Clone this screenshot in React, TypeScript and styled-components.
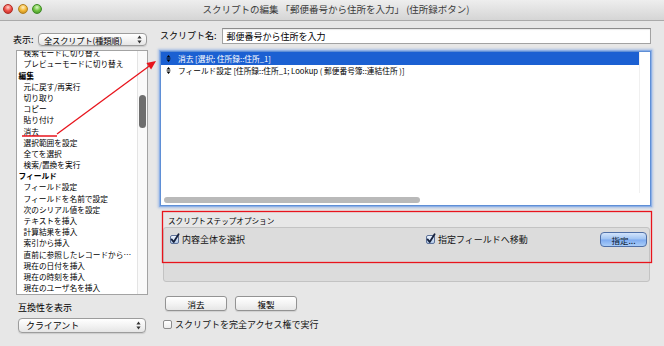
import React from 'react';
import styled, { createGlobalStyle } from 'styled-components';

const GlobalStyle = createGlobalStyle`
  html, body { margin: 0; padding: 0; background: #e7e7e7; }
  body { font-family: "Noto Sans CJK JP", "Liberation Sans", sans-serif; color: #000; }
  * { box-sizing: border-box; }
`;

const Window = styled.div`
  position: relative;
  width: 664px;
  height: 346px;
  background: #e7e7e7;
  overflow: hidden;
  display: flex;
  flex-direction: column;
`;

const TitleBar = styled.div`
  flex: none;
  height: 21px;
  display: grid;
  grid-template-columns: 1fr auto 1fr;
  align-items: center;
  padding: 0 0 2px 8px;
  background: linear-gradient(#eeeeee, #d5d5d5);
  border-bottom: 1px solid #aaaaaa;
`;

const Lights = styled.div`
  display: flex;
  gap: 4.5px;
  margin-left: -5px;
`;

const Light = styled.span<{ $hi: string; $c: string; $d: string }>`
  width: 10px;
  height: 10px;
  border-radius: 50%;
  background: radial-gradient(circle at 50% 30%, ${(p) => p.$hi} 0%, ${(p) => p.$c} 50%, ${(p) => p.$d} 100%);
  border: 1px solid ${(p) => p.$d};
`;

const Title = styled.div`
  font-size: 9.5px;
  color: #3a3a3a;
  white-space: nowrap;
`;

const Content = styled.div`
  flex: 1;
  display: grid;
  grid-template-columns: 135px 492px;
  column-gap: 12px;
  padding-left: 13px;
`;

const Column = styled.div`
  display: flex;
  flex-direction: column;
`;

const ShowRow = styled.div`
  display: flex;
  align-items: center;
  justify-content: space-between;
  width: 134px;
  margin-top: 12px;
  height: 13px;
`;

const Label = styled.span`
  font-size: 9px;
  line-height: 10px;
  white-space: nowrap;
`;

const PopUp = styled.div<{ $w: number; $h: number; $pl: number }>`
  width: ${(p) => p.$w}px;
  height: ${(p) => p.$h}px;
  flex: none;
  display: flex;
  align-items: center;
  justify-content: space-between;
  padding: 0 4px 0 ${(p) => p.$pl}px;
  background: linear-gradient(#ffffff, #f3f3f3 50%, #e5e5e5);
  border: 1px solid #9c9c9c;
  border-radius: 4px;
  box-shadow: 0 1px 1px rgba(0, 0, 0, 0.12);
`;

const PopText = styled.span<{ $fs: number }>`
  font-size: ${(p) => p.$fs}px;
  letter-spacing: -0.1px;
  white-space: nowrap;
`;

const SideList = styled.div`
  margin: 4px 0 0 3px;
  width: 132px;
  height: 245px;
  border: 1px solid #a3a3a3;
  background: #fff;
  display: flex;
  overflow: hidden;
`;

const SideItems = styled.div`
  flex: 1;
  min-width: 0;
  overflow: hidden;
`;

const SideInner = styled.div`
  margin-top: -3.8px;
`;

const SideItem = styled.div<{ $head?: boolean }>`
  height: 11.2px;
  line-height: 11.2px;
  font-size: 7.7px;
  padding-left: ${(p) => (p.$head ? 1.5 : 6.5)}px;
  font-weight: ${(p) => (p.$head ? 700 : 400)};
  white-space: nowrap;
`;

const SideTrack = styled.div`
  flex: none;
  width: 10px;
  border-left: 1px solid #e4e4e4;
  background: #fafafa;
  padding: 44px 0 0 1px;
`;

const SideThumb = styled.div`
  width: 7px;
  height: 33px;
  border-radius: 4px;
  background: #6e6e6e;
`;

const CompatLabel = styled(Label)`
  margin: 8px 0 0 5px;
`;

const CompatPop = styled.div`
  margin: 5px 0 0 5px;
`;

const NameRow = styled.div`
  display: flex;
  align-items: center;
  gap: 5px;
  margin: 7px 1px 0 0;
  height: 16px;
`;

const NameInput = styled.div`
  flex: 1;
  height: 16px;
  display: flex;
  align-items: center;
  padding-left: 4px;
  background: #fff;
  border: 1px solid #a2a2a2;
  border-top-color: #8c8c8c;
  box-shadow: inset 0 1px 1px rgba(0, 0, 0, 0.08);
  font-size: 9px;
  white-space: nowrap;
`;

const StepList = styled.div`
  margin-top: 7px;
  width: 491px;
  height: 155px;
  border: 1px solid #5f8fd6;
  box-shadow: 0 0 0 1px #8db0e6, 0 0 2px 2px rgba(120, 160, 225, 0.55);
  background: #fff;
  display: grid;
  grid-template-columns: 1fr 11px;
  grid-template-rows: 1fr 12px;
`;

const StepRows = styled.div`
  overflow: hidden;
`;

const StepRow = styled.div<{ $sel?: boolean }>`
  height: 12.5px;
  display: flex;
  align-items: center;
  gap: 7px;
  padding-left: 5px;
  background: ${(p) => (p.$sel ? '#1b60d2' : 'transparent')};
  color: ${(p) => (p.$sel ? '#ffffff' : '#000000')};
  font-size: 7.7px;
  white-space: nowrap;
`;

const VTrack = styled.div`
  border-left: 1px solid #f0f0f0;
`;

const HTrack = styled.div`
  padding: 4px 0 0 3px;
`;

const HThumb = styled.div`
  width: 256px;
  height: 6px;
  border-radius: 3px;
  background: #b9b9b9;
`;

const OptLabel = styled.div`
  margin: 10px 0 0 8px;
  font-size: 7.6px;
  line-height: 10px;
  white-space: nowrap;
`;

const GroupBox = styled.div`
  margin: 1px 0 0 3px;
  width: 487px;
  height: 55px;
  border: 1px solid #c3c3c3;
  border-radius: 3px;
  background: #dcdcdc;
  padding: 4px 2px 0 6px;
`;

const OptRow = styled.div`
  display: flex;
  align-items: center;
  height: 15px;
`;

const CheckItem = styled.label<{ $w?: number }>`
  display: flex;
  align-items: center;
  gap: 3px;
  width: ${(p) => (p.$w ? `${p.$w}px` : 'auto')};
  font-size: 9px;
  color: #111;
  white-space: nowrap;
`;

const Box = styled.span<{ $on?: boolean }>`
  width: 9px;
  height: 9px;
  flex: none;
  border-radius: 2px;
  border: 1px solid ${(p) => (p.$on ? '#5d7199' : '#8c8c8c')};
  background: ${(p) => (p.$on ? 'linear-gradient(#eef4fc, #b3cbea)' : 'linear-gradient(#ffffff, #ececec)')};
  display: flex;
  align-items: center;
  justify-content: center;
`;

const AquaButton = styled.div`
  margin-left: auto;
  width: 47px;
  height: 15px;
  display: flex;
  align-items: center;
  justify-content: center;
  border: 1px solid #4f6fa6;
  border-radius: 4px;
  background: linear-gradient(#d3e4fb, #9fc3f2 48%, #7daaf0 52%, #a9cdf8);
  font-size: 8.5px;
  color: #0d1a30;
`;

const ButtonRow = styled.div`
  display: flex;
  gap: 8px;
  margin: 14px 0 0 5px;
`;

const PushButton = styled.div`
  width: 62px;
  height: 15px;
  display: flex;
  align-items: center;
  justify-content: center;
  border: 1px solid #939393;
  border-radius: 3px;
  background: linear-gradient(#ffffff, #f4f4f4 50%, #e6e6e6);
  box-shadow: 0 1px 1px rgba(0, 0, 0, 0.1);
  font-size: 8.5px;
`;

const BottomCheck = styled.div`
  margin: 8px 0 0 3px;
  height: 10px;
  display: flex;
  align-items: center;
`;

const Annotation = styled.svg`
  position: absolute;
  left: 0;
  top: 0;
  width: 664px;
  height: 346px;
  pointer-events: none;
`;

const Arrows = () => (
  <svg width="5" height="9" viewBox="0 0 5 9" style={{ flex: 'none' }}>
    <path d="M2.5 0.5 L4.6 3.4 L0.4 3.4 Z M0.4 5.6 L4.6 5.6 L2.5 8.5 Z" fill="#333" />
  </svg>
);

const Grip = () => (
  <svg width="5" height="7" viewBox="0 0 5 7">
    <path d="M2.5 0 L4.5 2.6 L0.5 2.6 Z M0.5 4.4 L4.5 4.4 L2.5 7 Z M0.5 3.2 H4.5 V3.8 H0.5 Z" fill="#000" />
  </svg>
);

const Check = () => (
  <svg width="9" height="9" viewBox="0 0 9 9" style={{ overflow: 'visible' }}>
    <path d="M1.6 4.4 L3.7 7 L8.6 -0.8" stroke="#16213d" strokeWidth="1.8" fill="none" strokeLinecap="round" strokeLinejoin="round" />
  </svg>
);

const CheckBox = ({ on, label, w }: { on?: boolean; label: string; w?: number }) => (
  <CheckItem $w={w}>
    <Box $on={on}>{on && <Check />}</Box>
    {label}
  </CheckItem>
);

const sideItems: { t: string; h?: boolean }[] = [
  { t: '検索モードに切り替え' },
  { t: 'プレビューモードに切り替え' },
  { t: '編集', h: true },
  { t: '元に戻す/再実行' },
  { t: '切り取り' },
  { t: 'コピー' },
  { t: '貼り付け' },
  { t: '消去' },
  { t: '選択範囲を設定' },
  { t: '全てを選択' },
  { t: '検索/置換を実行' },
  { t: 'フィールド', h: true },
  { t: 'フィールド設定' },
  { t: 'フィールドを名前で設定' },
  { t: '次のシリアル値を設定' },
  { t: 'テキストを挿入' },
  { t: '計算結果を挿入' },
  { t: '索引から挿入' },
  { t: '直前に参照したレコードから…' },
  { t: '現在の日付を挿入' },
  { t: '現在の時刻を挿入' },
  { t: '現在のユーザ名を挿入' },
];

const steps = [
  { t: '消去 [選択; 住所録::住所_1]', sel: true },
  { t: 'フィールド設定 [住所録::住所_1; Lookup ( 郵便番号簿::連結住所 )]' },
];

export default function App() {
  return (
    <>
      <GlobalStyle />
      <Window>
        <TitleBar>
          <Lights>
            <Light $hi="#ffd6cf" $c="#ef4d45" $d="#b02a23" />
            <Light $hi="#fff1c6" $c="#f2b632" $d="#b27f1f" />
            <Light $hi="#dcf7c6" $c="#6fc23f" $d="#3d8a24" />
          </Lights>
          <Title>スクリプトの編集 「郵便番号から住所を入力」 (住所録ボタン)</Title>
          <span />
        </TitleBar>
        <Content>
          <Column>
            <ShowRow>
              <Label>表示:</Label>
              <PopUp $w={109} $h={13} $pl={5}>
                <PopText $fs={8.2}>全スクリプト(種類順)</PopText>
                <Arrows />
              </PopUp>
            </ShowRow>
            <SideList>
              <SideItems>
                <SideInner>
                  {sideItems.map((it, i) => (
                    <SideItem key={i} $head={it.h}>
                      {it.t}
                    </SideItem>
                  ))}
                </SideInner>
              </SideItems>
              <SideTrack>
                <SideThumb />
              </SideTrack>
            </SideList>
            <CompatLabel>互換性を表示</CompatLabel>
            <CompatPop>
              <PopUp $w={128} $h={15} $pl={7}>
                <PopText $fs={9}>クライアント</PopText>
                <Arrows />
              </PopUp>
            </CompatPop>
          </Column>
          <Column>
            <NameRow>
              <Label>スクリプト名:</Label>
              <NameInput>郵便番号から住所を入力</NameInput>
            </NameRow>
            <StepList>
              <StepRows>
                {steps.map((s, i) => (
                  <StepRow key={i} $sel={s.sel}>
                    <Grip />
                    {s.t}
                  </StepRow>
                ))}
              </StepRows>
              <VTrack />
              <HTrack>
                <HThumb />
              </HTrack>
              <span />
            </StepList>
            <OptLabel>スクリプトステップオプション</OptLabel>
            <GroupBox>
              <OptRow>
                <CheckBox on label="内容全体を選択" w={256} />
                <CheckBox on label="指定フィールドへ移動" />
                <AquaButton>指定...</AquaButton>
              </OptRow>
            </GroupBox>
            <ButtonRow>
              <PushButton>消去</PushButton>
              <PushButton>複製</PushButton>
            </ButtonRow>
            <BottomCheck>
              <CheckBox label="スクリプトを完全アクセス権で実行" />
            </BottomCheck>
          </Column>
        </Content>
        <Annotation viewBox="0 0 664 346">
          <line x1="22" y1="136" x2="57" y2="136" stroke="#e8141c" strokeWidth="1.3" />
          <line x1="57" y1="134" x2="150" y2="65.5" stroke="#e8141c" strokeWidth="1.3" />
          <polygon points="156,61 151.1,69.5 146.4,63.1" fill="#e8141c" />
          <rect x="162.5" y="211.5" width="489" height="51" fill="none" stroke="#e8141c" strokeWidth="1.3" />
        </Annotation>
      </Window>
    </>
  );
}
